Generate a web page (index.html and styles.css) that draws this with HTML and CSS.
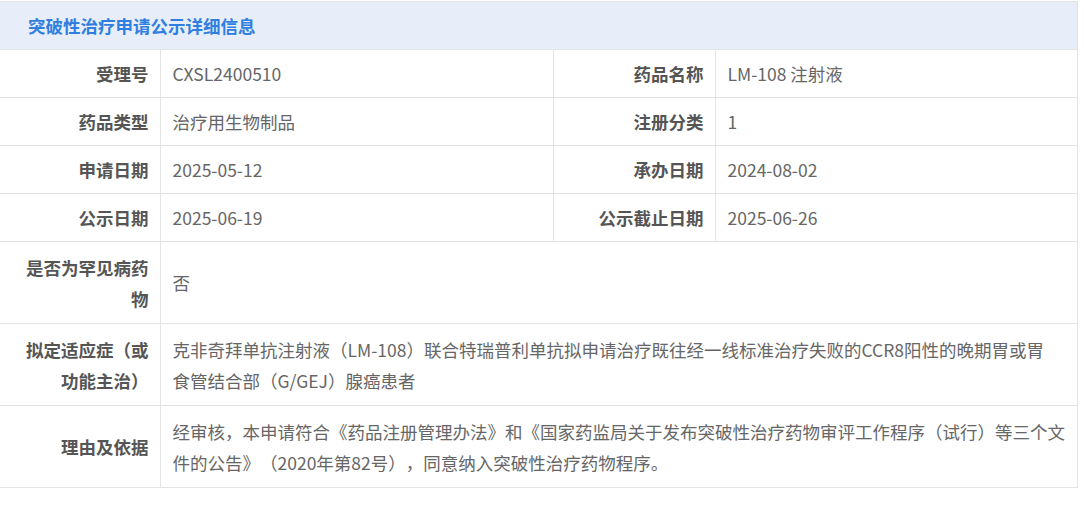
FILE: index.html
```html
<!DOCTYPE html>
<html lang="zh-CN">
<head>
    <meta charset="UTF-8">
    <meta name="viewport" content="width=device-width, initial-scale=1.0">
    <title>突破性治疗申请公示详细信息</title>
    <link rel="stylesheet" href="styles.css">
</head>
<body>
    <div class="detail-box">
        <div class="detail-title">突破性治疗申请公示详细信息</div>
        <table class="detail-table">
            <colgroup>
                <col class="col-label">
                <col class="col-value">
                <col class="col-label2">
                <col>
            </colgroup>
            <tr>
                <th>受理号</th>
                <td>CXSL2400510</td>
                <th>药品名称</th>
                <td>LM-108 注射液</td>
            </tr>
            <tr>
                <th>药品类型</th>
                <td>治疗用生物制品</td>
                <th>注册分类</th>
                <td>1</td>
            </tr>
            <tr>
                <th>申请日期</th>
                <td>2025-05-12</td>
                <th>承办日期</th>
                <td>2024-08-02</td>
            </tr>
            <tr>
                <th>公示日期</th>
                <td>2025-06-19</td>
                <th>公示截止日期</th>
                <td>2025-06-26</td>
            </tr>
            <tr class="tall">
                <th>是否为罕见病药物</th>
                <td colspan="3">否</td>
            </tr>
            <tr class="tall">
                <th>拟定适应症（或功能主治）</th>
                <td colspan="3">克非奇拜单抗注射液（LM-108）联合特瑞普利单抗拟申请治疗既往经一线标准治疗失败的CCR8阳性的晚期胃或胃<br>食管结合部（G/GEJ）腺癌患者</td>
            </tr>
            <tr class="tall">
                <th>理由及依据</th>
                <td colspan="3">经审核，本申请符合《药品注册管理办法》和《国家药监局关于发布突破性治疗药物审评工作程序（试行）等三个文件的公告》（2020年第82号），同意纳入突破性治疗药物程序。</td>
            </tr>
        </table>
    </div>
</body>
</html>
```

FILE: styles.css
```css
* {
    margin: 0;
    padding: 0;
    box-sizing: border-box;
}

body {
    padding-top: 1px;
    margin-left: -1px;
    width: 1079px;
    background-color: #fff;
    font-family: "Noto Sans CJK SC", "Microsoft YaHei", sans-serif;
    font-size: 17.5px;
    text-spacing-trim: space-all;
}

.detail-box {
    border: 1px solid #e3e3e3;
}

.detail-title {
    height: 48px;
    line-height: 48px;
    padding-left: 28px;
    background-color: #e7eefa;
    color: #2f7ee0;
    font-weight: bold;
    font-size: 17.5px;
    border-bottom: 1px solid #e3e3e3;
}

.detail-table {
    width: 100%;
    border-collapse: collapse;
    table-layout: fixed;
}

.col-label {
    width: 160px;
}

.col-value {
    width: 393px;
}

.col-label2 {
    width: 162px;
}

.detail-table th,
.detail-table td {
    border: 1px solid #e3e3e3;
    padding: 8px 8px 8px 12px;
    line-height: 31px;
    vertical-align: middle;
}

.detail-table tr:first-child th,
.detail-table tr:first-child td {
    border-top: none;
}

.detail-table tr:last-child th,
.detail-table tr:last-child td {
    border-bottom: none;
}

.detail-table th:first-child {
    border-left: none;
}

.detail-table tr > :last-child {
    border-right: none;
}

.detail-table th {
    text-align: right;
    color: #555;
    font-weight: bold;
    padding-right: 11px;
}

.detail-table td {
    text-align: left;
    color: #666;
}

.detail-table tr.tall th,
.detail-table tr.tall td {
    padding-top: 9.5px;
    padding-bottom: 9.5px;
}
```
